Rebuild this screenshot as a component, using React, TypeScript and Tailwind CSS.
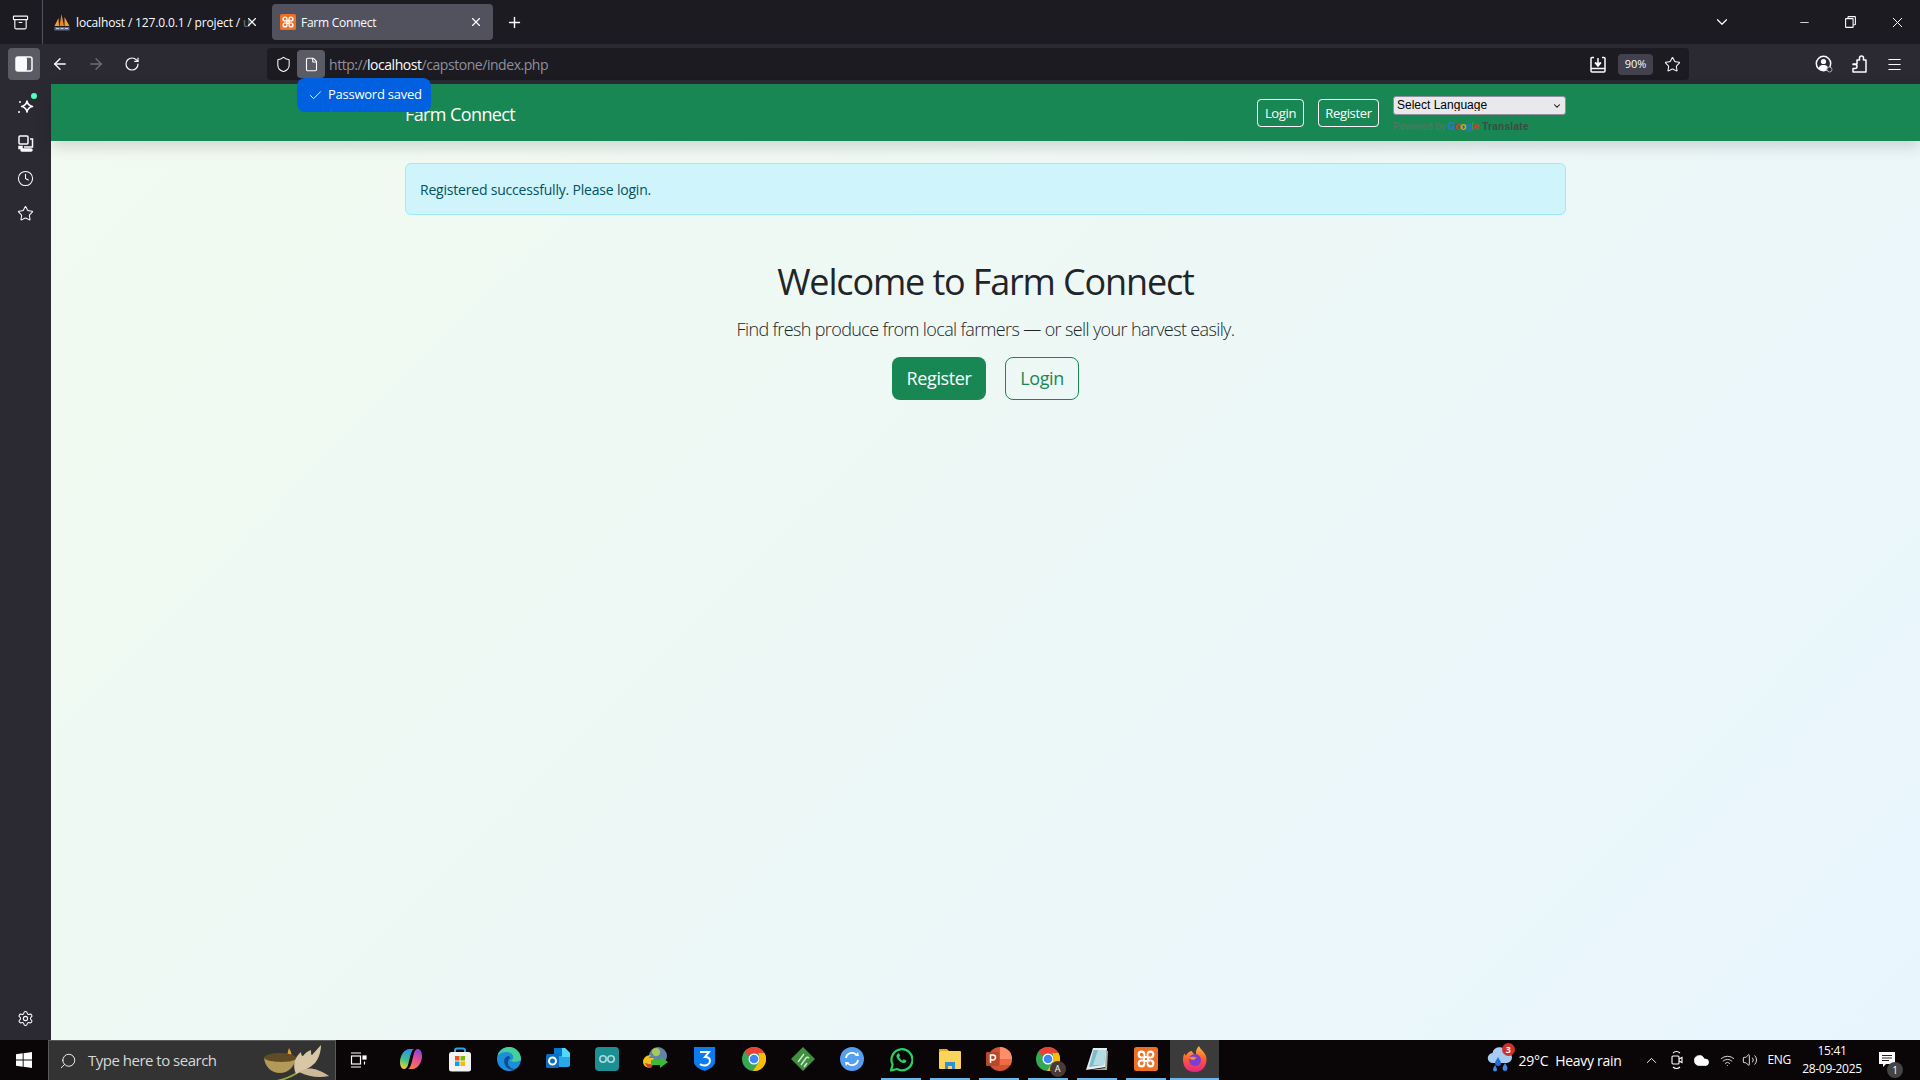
import { ArrowLeft, ArrowRight, Archive, Check, ChevronDown, ChevronUp, Clock, Cloud, File, Menu, Minus, Plus, RotateCw, Search, Settings, Shield, Star, Volume2, Wifi, X } from 'lucide-react';
import type { ReactNode } from 'react';

// Firefox chrome icons
function SidebarToggle() {
  return (
    <svg width="18" height="16" viewBox="0 0 18 16" fill="none">
      <rect x="1" y="1" width="16" height="14" rx="2" stroke="#fbfbfe" strokeWidth="1.5" />
      <rect x="1" y="1" width="11" height="14" rx="2" fill="#fbfbfe" />
    </svg>
  );
}

function Sparkle() {
  return (
    <svg width="18" height="20" viewBox="0 0 18 20" fill="none">
      <path d="M10 4c.6 3.4 2 4.8 5.5 5.5-3.5.7-4.9 2.1-5.5 5.5-.6-3.4-2-4.8-5.500-5.500C8 8.800 9.400 7.400 10 4z" stroke="#fbfbfe" strokeWidth="1.5" strokeLinejoin="round" />
      <circle cx="3" cy="5" r="1" fill="#fbfbfe" />
      <circle cx="2" cy="15" r="1" fill="#fbfbfe" />
    </svg>
  );
}

function SyncedTabs() {
  return (
    <svg width="16" height="17" viewBox="0 0 16 17" fill="none" stroke="#fbfbfe" strokeWidth="1.5">
      <rect x="1" y="1" width="9" height="8" rx="1" />
      <path d="M12 4h2.5v8H6" />
      <rect x="1" y="11.5" width="3" height="2" fill="#fbfbfe" />
      <rect x="3" y="14" width="11" height="2" rx="1" fill="#fbfbfe" />
    </svg>
  );
}

function SaveToPocket() {
  return (
    <svg width="16" height="17" viewBox="0 0 16 17" fill="none" stroke="#fbfbfe" strokeWidth="1.5">
      <path d="M4 1.500H2a1 1 0 0 0-1 1V15a1 1 0 0 0 1 1h12a1 1 0 0 0 1-1V2.500a1 1 0 0 0-1-1h-2" />
      <path d="M1 12.500h14" />
      <path d="M8 2v6" />
      <path d="M5 6.500l3 3.500 3-3.500" fill="#fbfbfe" />
    </svg>
  );
}

function AccountIcon() {
  return (
    <svg width="18" height="18" viewBox="0 0 18 18" fill="none">
      <circle cx="8.5" cy="8.5" r="7.2" stroke="#fbfbfe" strokeWidth="1.5" />
      <circle cx="8.5" cy="6.5" r="2.6" fill="#fbfbfe" />
      <path d="M3.500 13c1-2.500 2.800-3 5-3s3.500.6 4.500 2.500c-1 2-3 3-5 3s-3.500-1-4.500-2.500z" fill="#fbfbfe" />
      <circle cx="14.5" cy="14.5" r="2.5" fill="#2b2a33" stroke="#a8a8b0" strokeWidth="1" />
    </svg>
  );
}

function ExtensionsIcon() {
  return (
    <svg width="15" height="18" viewBox="0 0 15 18" fill="none" stroke="#fbfbfe" strokeWidth="1.5" strokeLinejoin="round">
      <path d="M5 5h2.500V3a2 2 0 0 1 4 0v2h2.500v12H1v-3.500h2a2 2 0 0 0 0-4H1V9h4z" />
    </svg>
  );
}

function RestoreIcon() {
  return (
    <svg width="11" height="12" viewBox="0 0 11 12" fill="none" stroke="#fbfbfe" strokeWidth="1.1">
      <rect x="0.6" y="2.6" width="7.5" height="8.8" rx="0.5" />
      <path d="M3 2.500V1.200c0-.3.300-.6.600-.6h6.200c.3 0 .6.300.6.600v7c0 .3-.3.600-.6.600H8.200" />
    </svg>
  );
}

// favicons
function PmaSail() {
  return (
    <svg width="16" height="17" viewBox="0 0 16 17">
      <path d="M0.500 12 L4.500 4 L5 12z" fill="#f0a030" />
      <path d="M5.500 12 L7.500 0 L10 12z" fill="#e98a1e" />
      <path d="M10.500 12 L10.500 3 L15.500 12z" fill="#f0a030" />
      <rect x="0.5" y="13" width="15" height="3.5" fill="#5f6c8c" />
      <path d="M2 14.500h3M6.500 14.500h3M11 14.500h3" stroke="#c8ccd8" strokeWidth="1" />
    </svg>
  );
}

function XamppIcon({ size = 16 }: { size?: number }) {
  return (
    <svg width={size} height={size} viewBox="0 0 24 24">
      <rect width="24" height="24" rx="2.5" fill="#ee7026" />
      <g fill="none" stroke="#fff" strokeWidth="2.2">
        <circle cx="7.5" cy="7.5" r="2.8" />
        <circle cx="16.500" cy="7.5" r="2.8" />
        <circle cx="7.5" cy="16.5" r="2.8" />
        <circle cx="16.5" cy="16.5" r="2.8" />
        <path d="M10 10h4v4h-4z" />
      </g>
      <path d="M7 7h2.500v2.500H7zM14.500 7H17v2.500h-2.500zM7 14.500h2.500V17H7zM14.500 14.500H17V17h-2.500z" fill="#ee7026" />
    </svg>
  );
}

// taskbar icons
function WindowsLogo() {
  return (
    <svg width="16" height="16" viewBox="0 0 16 16" fill="#fff">
      <path d="M0 2.300 6.700 1.300v6.300H0zM7.600 1.200 16 0v7.600H7.600zM0 8.400h6.700v6.300L0 13.700zM7.600 8.400H16V16l-8.400-1.200z" />
    </svg>
  );
}

function Diya() {
  return (
    <svg width="72" height="36" viewBox="0 0 72 36">
      <path d="M14 36C22 34 28 32 34 28" stroke="#9aa53a" strokeWidth="2" fill="none" />
      <path d="M26 14c-3-3-1-7 0-11 2 4 4 7 1 11z" fill="#f0a020" />
      <ellipse cx="17" cy="13" rx="16" ry="5" fill="#5f4c24" />
      <path d="M1 13c1 9 8 15 16 15s14-6 16-14c-4 4-28 4-32-1z" fill="#b49a58" />
      <path d="M33 29C29 20 32 12 38 7c0 3 1 4 2 4 2-3 5-5 8-6 0 3 0 5 1 5 3-3 6-7 9-10 0 6-2 13-6 18-5 5-12 8-19 11z" fill="#d8c6a6" />
      <path d="M36 27c8-6 18-4 30 4-10 2-20 1-30-4z" fill="#cdb998" />
    </svg>
  );
}

function TaskView() {
  return (
    <svg width="17" height="16" viewBox="0 0 17 16" fill="none" stroke="#fff" strokeWidth="1.2">
      <path d="M1 1h10M1 15h10" />
      <rect x="1.5" y="4" width="9" height="8" />
      <rect x="13" y="4" width="3" height="3" fill="#fff" />
      <path d="M14.500 9.500v3" />
    </svg>
  );
}

function Copilot() {
  return (
    <svg width="24" height="24" viewBox="0 0 24 24">
      <defs>
        <linearGradient id="cpa" x1="0.6" y1="0" x2="0.3" y2="1">
          <stop offset="0" stopColor="#2f8ff0" />
          <stop offset="0.55" stopColor="#3fc08a" />
          <stop offset="1" stopColor="#f2d03a" />
        </linearGradient>
        <linearGradient id="cpb" x1="0.6" y1="0" x2="0.3" y2="1">
          <stop offset="0" stopColor="#f07a50" />
          <stop offset="0.55" stopColor="#e04a9a" />
          <stop offset="1" stopColor="#7a4ae0" />
        </linearGradient>
      </defs>
      <path d="M1 15C1 9 5 2 10.500 2H15c-2 1-3 4-4 8l-2 8c-.5 2-2 4-4 4-2.500 0-4-3-4-7z" fill="url(#cpa)" />
      <path d="M1 15C1 9 5 2 10.500 2H15c-2 1-3 4-4 8l-2 8c-.5 2-2 4-4 4-2.500 0-4-3-4-7z" fill="url(#cpb)" transform="rotate(180 12 12)" />
    </svg>
  );
}

function StoreIcon() {
  return (
    <svg width="24" height="25" viewBox="0 0 24 25">
      <path d="M7 7V3.500a2 2 0 0 1 2-2h6a2 2 0 0 1 2 2V7" fill="none" stroke="#2aa8e8" strokeWidth="2" />
      <rect x="1" y="5" width="22" height="19.500" rx="2.500" fill="#f3f3f3" />
      <rect x="7" y="9" width="4.5" height="4.5" fill="#f25022" />
      <rect x="12.5" y="9" width="4.5" height="4.5" fill="#7fba00" />
      <rect x="7" y="14.5" width="4.5" height="4.5" fill="#00a4ef" />
      <rect x="12.5" y="14.5" width="4.5" height="4.5" fill="#ffb900" />
    </svg>
  );
}

function EdgeIcon() {
  return (
    <svg width="24" height="24" viewBox="0 0 24 24">
      <circle cx="12" cy="12" r="12" fill="#1b8fdc" />
      <path d="M24 13C24 6 19 0 12 0 6 0 1.500 4 .5 9c2-3 6-4.500 10-4 4 .5 6.500 3.500 5.500 6.500-.5 2-4 2-4 .5 2 3 7 3.500 10 2z" fill="#46cf9a" />
      <path d="M11 9c-4 1-5 6-2.500 10 2 3 7 5 11.500 2.500-3 1-7 0-8.500-3.500-1-2.500-.5-6 2-7-1-1.500-1.500-2.200-2.500-2z" fill="#0c4f96" />
    </svg>
  );
}

function OutlookIcon() {
  return (
    <svg width="24" height="24" viewBox="0 0 24 24">
      <path d="M8 1h11l5 5v12c0 1-1 2-2 2H10z" fill="#28a8ea" />
      <path d="M8 1h8v8H8z" fill="#0078d4" />
      <path d="M16 1h3l5 5v4h-8z" fill="#50d9ff" />
      <rect x="0" y="7" width="13" height="14" rx="1.5" fill="#0f6cbd" />
      <circle cx="6.5" cy="14" r="3.5" fill="none" stroke="#fff" strokeWidth="2" />
    </svg>
  );
}

function ArduinoIcon() {
  return (
    <svg width="24" height="24" viewBox="0 0 24 24">
      <rect width="24" height="24" rx="4" fill="#1b8f92" />
      <circle cx="8" cy="12" r="3.2" fill="none" stroke="#a9dcdc" strokeWidth="1.6" />
      <circle cx="16" cy="12" r="3.2" fill="none" stroke="#a9dcdc" strokeWidth="1.6" />
    </svg>
  );
}

function IdmIcon() {
  return (
    <svg width="26" height="26" viewBox="0 0 26 26">
      <circle cx="15" cy="10" r="9" fill="#5f84a8" />
      <path d="M10 3c3-2 6-1 7 2s-2 6-5 5-4-5-2-7z" fill="#a8c85a" />
      <path d="M0 15c1-4 4-6 8-6l-2 3h5l-5 10c-4-1-6-3-6-7z" fill="#f0c020" />
      <path d="M2 17c1 3 3 5 6 5l2-3z" fill="#d8402a" />
      <path d="M8 14h10v-3l7 5-8 6v-3H8z" fill="#3fb83a" />
    </svg>
  );
}

function ShieldThree() {
  return (
    <svg width="21" height="24" viewBox="0 0 21 24">
      <path d="M0 0h21v15c0 4-5 7-10.500 9C5 22 0 19 0 15z" fill="#0a7cf0" />
      <path d="M6 5h9l-4 5c3 0 5 1.500 5 4s-3 4.500-5.500 4.500c-2 0-3.500-.5-4.500-1.500" fill="none" stroke="#fff" strokeWidth="2" />
    </svg>
  );
}

function ChromeIcon({ size = 24 }: { size?: number }) {
  return (
    <svg width={size} height={size} viewBox="0 0 24 24">
      <circle cx="12" cy="12" r="12" fill="#34a853" />
      <path d="M12 0a12 12 0 0 1 10.400 6H12a6 6 0 0 0-5.400 3.400L2.500 4.500A12 12 0 0 1 12 0z" fill="#ea4335" />
      <path d="M22.400 6A12 12 0 0 1 11 24l5.500-8.500A6 6 0 0 0 17 9l-.5-3z" fill="#fbbc04" />
      <circle cx="12" cy="12" r="5.500" fill="#fff" />
      <circle cx="12" cy="12" r="4.300" fill="#4285f4" />
    </svg>
  );
}

function GreenDiamond() {
  return (
    <svg width="24" height="24" viewBox="0 0 24 24">
      <path d="M12 0l12 12-12 12L0 12z" fill="#3f8f3f" />
      <path d="M7 15l6-8M10 18l5-7c1-1 2-1 3 0M13 20l3-4" stroke="#d8ecd8" strokeWidth="1.4" fill="none" />
    </svg>
  );
}

function SyncCircle() {
  return (
    <svg width="24" height="24" viewBox="0 0 24 24">
      <circle cx="12" cy="12" r="12" fill="#559ff0" />
      <path d="M6 11a6 6 0 0 1 10.500-3M18 13a6 6 0 0 1-10.500 3" stroke="#fff" strokeWidth="1.8" fill="none" />
      <path d="M15 9l4 0-1-4zM9 15l-4 0 1 4z" fill="#fff" />
    </svg>
  );
}

function WhatsApp() {
  return (
    <svg width="24" height="25" viewBox="0 0 24 25">
      <path d="M2 23.500l1.600-6A10.500 10.500 0 1 1 8 22z" fill="none" stroke="#25d366" strokeWidth="2.2" strokeLinejoin="round" />
      <path d="M8.500 7c-1.500 1-1.500 3 .5 5.500s4.500 4 6.500 3.500c1.500-.4 2-1.500 1.800-2.500l-2.500-1.200-1.200 1.200c-1.500-.6-2.800-1.900-3.500-3.500l1-1.200-1.100-2.500c-.4 0-1 .1-1.500.7z" fill="#25d366" />
    </svg>
  );
}

function Explorer() {
  return (
    <svg width="24" height="24" viewBox="0 0 24 24">
      <path d="M1 2h8l2 2H1z" fill="#e8a820" />
      <rect x="1" y="4" width="22" height="18" rx="1" fill="#fbd45c" />
      <path d="M7 22v-7h10v7h-3v-3h-4v3z" fill="#2f8fd8" />
    </svg>
  );
}

function PowerPoint() {
  return (
    <svg width="26" height="24" viewBox="0 0 26 24">
      <circle cx="14" cy="12" r="12" fill="#d35230" />
      <path d="M14 0a12 12 0 0 1 12 12H14z" fill="#ff8f6b" />
      <path d="M14 12h12a12 12 0 0 1-1.500 6H14z" fill="#ed6c47" />
      <rect x="0" y="5" width="13" height="14" rx="1" fill="#b7472a" />
      <path d="M4.500 16V8h2.500a2.500 2.500 0 0 1 0 5H4.500" fill="none" stroke="#fff" strokeWidth="1.6" />
    </svg>
  );
}

function Notepad() {
  return (
    <svg width="24" height="25" viewBox="0 0 24 25">
      <path d="M8 1h14l-1 19L1 23z" fill="#e8eef0" />
      <path d="M8.500 3h12L19 18 4 20z" fill="#7fbcc8" />
      <path d="M13 3h7.500L19 18H8z" fill="#b4dce2" />
      <path d="M21 4h2l-1 19H6l14-2z" fill="#a8a8a0" />
    </svg>
  );
}

function FirefoxIcon() {
  return (
    <svg width="24" height="26" viewBox="0 0 24 26">
      <defs>
        <linearGradient id="ffa" x1="0.5" y1="0" x2="0.5" y2="1">
          <stop offset="0" stopColor="#ffbd2e" />
          <stop offset="0.5" stopColor="#ff5a36" />
          <stop offset="1" stopColor="#e8238a" />
        </linearGradient>
      </defs>
      <path d="M16 0c1 3 5 5 7 10 2 7-2 16-11 16S0 20 0 13c0-2 .5-4 1.500-6 0 1 .5 2 1.500 2.500C4 7 7 5 9 5c0 2 3 3 5 5-2-3-1-7 2-10z" fill="url(#ffa)" />
      <circle cx="12" cy="14" r="6" fill="#7a3fd0" />
      <path d="M6 12c3-2 6-1 8 0-2 0-2 1-3 2-2 0-4-1-5-2z" fill="#ff8a2e" />
    </svg>
  );
}

function WeatherIcon() {
  return (
    <svg width="26" height="30" viewBox="0 0 26 30">
      <path d="M6 18a5 5 0 0 1-.5-10A7 7 0 0 1 19 7a5.500 5.500 0 0 1 1 11z" fill="#a8cdf5" />
      <path d="M11 12c1.500 3 3 4 3 6a3 3 0 0 1-6 0c0-2 1.500-3 3-6z" fill="#1f6fd8" />
      <path d="M18 18c1 2 2.500 3.500 2.500 5.500a2.500 2.500 0 0 1-5 0c0-2 1.500-3.500 2.500-5.500zM8 20c1 2 2 3 2 4.500a2 2 0 0 1-4 0c0-1.500 1-2.500 2-4.500z" fill="#3d8ae8" />
    </svg>
  );
}

function MeetIcon() {
  return (
    <svg width="12" height="20" viewBox="0 0 12 20" fill="none" stroke="#fff" strokeWidth="1.1">
      <path d="M2 3c2-2 5-2 7 0M2 17c2 2 5 2 7 0" />
      <rect x="1" y="6" width="7" height="8" rx="1" />
      <path d="M8 9l3-1.500v5L8 11" />
    </svg>
  );
}

function NotificationIcon() {
  return (
    <svg width="16" height="16" viewBox="0 0 16 16">
      <path d="M0 0h16v12H7l-3 3v-3H0z" fill="#fff" />
      <path d="M3 3.500h10M3 6h10M3 8.500h7" stroke="#222" strokeWidth="1" />
    </svg>
  );
}

type Pinned = { name: string; icon: ReactNode; open?: boolean; active?: boolean };

const pinned: Pinned[] = [
  { name: 'Copilot', icon: <Copilot /> },
  { name: 'Store', icon: <StoreIcon /> },
  { name: 'Edge', icon: <EdgeIcon /> },
  { name: 'Outlook', icon: <OutlookIcon /> },
  { name: 'Arduino', icon: <ArduinoIcon /> },
  { name: 'IDM', icon: <IdmIcon /> },
  { name: 'Shield', icon: <ShieldThree /> },
  { name: 'Chrome', icon: <ChromeIcon /> },
  { name: 'Diamond', icon: <GreenDiamond /> },
  { name: 'Sync', icon: <SyncCircle /> },
  { name: 'WhatsApp', icon: <WhatsApp />, open: true },
  { name: 'Explorer', icon: <Explorer />, open: true },
  { name: 'PowerPoint', icon: <PowerPoint />, open: true },
  {
    name: 'Chrome profile',
    open: true,
    icon: (
      <div className="relative">
        <ChromeIcon />
        <span className="absolute -right-1.5 -bottom-1.5 flex h-4 w-4 items-center justify-center rounded-full bg-[#4a3a36] text-[9px] text-white">A</span>
      </div>
    ),
  },
  { name: 'Notepad', icon: <Notepad />, open: true },
  { name: 'XAMPP', icon: <XamppIcon size={24} />, open: true },
  { name: 'Firefox', icon: <FirefoxIcon />, open: true, active: true },
];

function TabBar() {
  return (
    <div className="flex h-11 items-center bg-[#1c1b22] text-[#fbfbfe]">
      <div className="flex h-full w-[43px] items-center justify-center border-r border-[#52525e] pr-0.5">
        <Archive size={17} strokeWidth={1.6} />
      </div>
      <div className="ml-[11px] flex w-[208px] items-center">
        <PmaSail />
        <span className="ml-[6px] w-[167px] pt-px text-[12px] tracking-[-0.15px] whitespace-nowrap">
          localhost / 127.0.0.1 / project / <span className="opacity-40">u</span>
        </span>
        <X size={14} strokeWidth={2} className="ml-0.5 shrink-0" />
      </div>
      <div className="ml-2.5 flex h-9 w-[221px] items-center rounded bg-[#52525e] pr-2.5 pl-2">
        <XamppIcon />
        <span className="ml-[5px] flex-1 pt-px text-[12px] tracking-[-0.25px]">Farm Connect</span>
        <X size={14} strokeWidth={2} />
      </div>
      <Plus size={17} strokeWidth={2} className="ml-[13px]" />
      <div className="ml-auto flex items-center">
        <ChevronDown size={18} strokeWidth={1.6} className="mr-[67px]" />
        <Minus size={13} strokeWidth={1.5} className="mr-[34px]" />
        <span className="mr-[33px]">
          <RestoreIcon />
        </span>
        <X size={17} strokeWidth={1.4} className="mr-[14px]" />
      </div>
    </div>
  );
}

function ToolBar() {
  return (
    <div className="relative flex h-10 items-center bg-[#2b2a33] text-[#fbfbfe]">
      <div className="ml-2 flex h-8 w-8 items-center justify-center rounded bg-[#5b5b66]">
        <SidebarToggle />
      </div>
      <ArrowLeft size={18} strokeWidth={1.8} className="ml-[11px]" />
      <ArrowRight size={18} strokeWidth={1.8} className="ml-[18px] text-[#6f6e76]" />
      <RotateCw size={16} strokeWidth={1.8} className="ml-[19px]" />
      <div className="ml-[127px] flex h-8 w-[1422px] shrink-0 items-center rounded bg-[#1c1b22] pr-2">
        <Shield size={17} strokeWidth={1.5} className="ml-2" />
        <div className="ml-[5px] flex h-[28px] w-7 items-center justify-center rounded-sm bg-[#5b5b66]">
          <File size={15} strokeWidth={1.8} />
        </div>
        <span className="ml-1 text-[14px] tracking-[-0.45px] text-[#8f8f9d]">
          http://<span className="text-[#fbfbfe]">localhost</span>/capstone/index.php
        </span>
        <div className="ml-auto flex items-center">
          <SaveToPocket />
          <span className="mr-[3px] ml-[12px] flex h-[21px] w-[35px] items-center justify-center rounded bg-[#42414d] text-[11px]">90%</span>
          <Star size={17} strokeWidth={1.5} className="ml-[8px]" />
        </div>
      </div>
      <div className="ml-[126px] flex items-center">
        <AccountIcon />
        <span className="ml-[19px]">
          <ExtensionsIcon />
        </span>
        <Menu size={17} strokeWidth={1.6} className="ml-[19px]" />
      </div>
      {/* confirmation hint over the page */}
      <div className="absolute top-[34px] left-[297px] z-20 flex h-[34px] w-[134px] items-center rounded-lg bg-[#0060df] pl-[11px] text-[13px] tracking-[-0.25px] text-white">
        <Check size={15} strokeWidth={1.5} />
        <span className="ml-[5px]">Password saved</span>
      </div>
    </div>
  );
}

function SideBar() {
  return (
    <div className="flex w-[51px] shrink-0 flex-col items-center bg-[#2b2a33] pt-[13px] pb-[13px] text-[#fbfbfe]">
      <div className="relative">
        <Sparkle />
        <span className="absolute -top-1 -right-0.5 h-[6px] w-[6px] rounded-full bg-[#54ffbd]" />
      </div>
      <div className="mt-[18px]">
        <SyncedTabs />
      </div>
      <Clock size={17} strokeWidth={1.5} className="mt-[18px]" />
      <Star size={17} strokeWidth={1.5} className="mt-[18px]" />
      <Settings size={17} strokeWidth={1.5} className="mt-auto" />
    </div>
  );
}

function Navbar() {
  return (
    <div className="relative z-10 h-[57px] bg-[#198754] shadow-[0_6px_14px_rgba(0,0,0,0.14)]">
      <div className="mx-auto flex h-full w-[1161px] items-start">
        <span className="mt-[17px] text-[18px] tracking-[-0.6px] text-white">Farm Connect</span>
        <div className="mt-[15px] ml-auto flex gap-[14px] text-[13px] tracking-[-0.35px] text-white">
          <button className="h-[28px] w-[47px] rounded border border-white pt-px">Login</button>
          <button className="h-[28px] w-[61px] rounded border border-white pt-px">Register</button>
        </div>
        <div className="mt-3 ml-[14px] w-[173px]">
          <div className="relative">
            <select className="block h-[19px] w-full appearance-none rounded-[3px] border border-[#8f8f9d] bg-[#e9e9ed] pb-px pl-[3px] font-['Liberation_Sans',sans-serif] text-[12px] leading-none text-black">
              <option>Select Language</option>
            </select>
            <ChevronDown size={10} strokeWidth={2.5} className="absolute top-[5px] right-[4px] text-black" />
          </div>
          <div className="mt-[7px] flex items-center font-['Liberation_Sans',sans-serif] text-[10px] leading-none text-[#4f7a63]">
            Powered by
            <span className="ml-[2px] font-bold tracking-[-0.7px]">
              <span className="text-[#2a74d8]">G</span>
              <span className="text-[#c8402a]">o</span>
              <span className="text-[#d8a820]">o</span>
              <span className="text-[#2a74d8]">g</span>
              <span className="text-[#3a9a50]">l</span>
              <span className="text-[#c8402a]">e</span>
            </span>
            <span className="ml-1 font-bold tracking-[0.3px] text-[#3e4a44]">Translate</span>
          </div>
        </div>
      </div>
    </div>
  );
}

function Hero() {
  return (
    <div className="mt-[45px] flex flex-col items-center text-[#212529]">
      <h1 className="text-[36px] leading-[43px] tracking-[-1.15px]">Welcome to Farm Connect</h1>
      <p className="mt-[13px] text-[18px] leading-[27px] font-light tracking-[-0.63px]">Find fresh produce from local farmers — or sell your harvest easily.</p>
      <div className="mt-[14px] flex gap-[19px] text-[18px] tracking-[-0.4px]">
        <button className="h-[43px] w-[94px] rounded-lg bg-[#198754] text-white">Register</button>
        <button className="h-[43px] w-[74px] rounded-lg border border-[#198754] text-[#198754]">Login</button>
      </div>
    </div>
  );
}

function Taskbar() {
  return (
    <div className="flex h-10 items-center bg-[#0a0506] text-white">
      <div className="flex h-full w-12 items-center justify-center">
        <WindowsLogo />
      </div>
      <div className="flex h-full w-[288px] items-center overflow-hidden border border-b-0 border-[#5a5a5a] bg-[#333333] pl-[10px]">
        <Search size={18} strokeWidth={1.2} className="-scale-x-100" />
        <span className="ml-[11px] text-[15px] tracking-[-0.5px] text-[#d8d8d8]">Type here to search</span>
        <div className="mt-1 ml-auto">
          <Diya />
        </div>
      </div>
      <div className="flex h-full w-[50px] items-center justify-center pr-[5px]">
        <TaskView />
      </div>
      {pinned.map((app) => (
        <div key={app.name} className={`flex h-full w-[49px] flex-col items-center ${app.active ? 'bg-[#3b3b3b]' : ''}`}>
          <div className="flex flex-1 items-center justify-center">{app.icon}</div>
          <div className={`h-[2px] ${app.active ? 'w-full' : 'w-10'} ${app.open ? 'bg-[#6cb6ee]' : ''}`} />
        </div>
      ))}
      <div className="ml-auto flex h-full items-center text-[14px] tracking-[-0.3px]">
        <div className="relative">
          <WeatherIcon />
          <span className="absolute -top-0.5 -right-0.5 flex h-[13px] w-[13px] items-center justify-center rounded-full bg-[#d0312d] text-[9px] font-bold">3</span>
        </div>
        <span className="ml-[6px]">29°C</span>
        <span className="ml-[7px]">Heavy rain</span>
        <ChevronUp size={17} strokeWidth={1.3} className="ml-[22px]" />
        <span className="ml-[11px]">
          <MeetIcon />
        </span>
        <Cloud size={17} fill="#ffffff" strokeWidth={1} className="ml-[10px]" />
        <Wifi size={15} strokeWidth={1.3} className="ml-[10px]" />
        <Volume2 size={16} strokeWidth={1.3} className="ml-[7px]" />
        <span className="ml-[9px] text-[12px]">ENG</span>
        <div className="ml-[12px] flex w-[58px] flex-col items-center text-[12px] leading-[18px]">
          <span>15:41</span>
          <span className="whitespace-nowrap">28-09-2025</span>
        </div>
        <div className="relative mr-[25px] ml-[18px]">
          <NotificationIcon />
          <span className="absolute -right-2 -bottom-2.5 flex h-4 w-4 items-center justify-center rounded-full bg-[#444] text-[10px]">1</span>
        </div>
      </div>
    </div>
  );
}

export default function App() {
  return (
    <div className="flex h-[1080px] w-[1920px] flex-col overflow-hidden font-['Open_Sans',sans-serif]">
      <TabBar />
      <ToolBar />
      <div className="flex flex-1">
        <SideBar />
        <div className="flex-1 bg-[linear-gradient(135deg,#f2fbf0,#e8f5fd)]">
          <Navbar />
          <div className="mx-auto mt-[22px] flex h-[52px] w-[1161px] items-center rounded-md border border-[#9eeaf9] bg-[#cff4fc] pl-[14px] text-[14px] tracking-[-0.2px] text-[#055160]">
            Registered successfully. Please login.
          </div>
          <Hero />
        </div>
      </div>
      <Taskbar />
    </div>
  );
}
